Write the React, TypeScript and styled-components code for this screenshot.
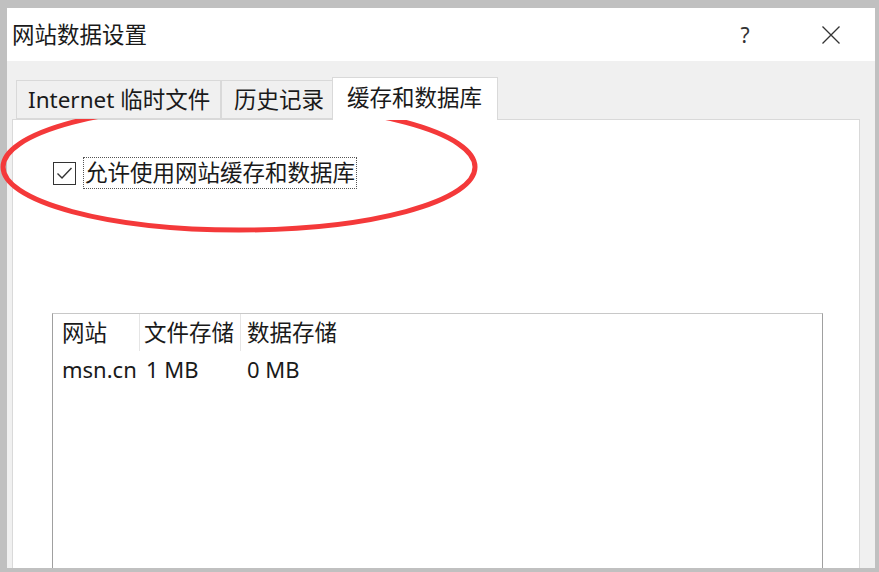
import React from "react";
import styled, { createGlobalStyle } from "styled-components";

const GlobalStyle = createGlobalStyle`
  html, body { margin: 0; padding: 0; background: #c0c0c0; }
  body { font-family: "Noto Sans", "Noto Sans CJK SC", sans-serif; }
`;

const FONT = `"Noto Sans", "Noto Sans CJK SC", sans-serif`;
const SIZE = "22.5px";

const Frame = styled.div`
  position: relative;
  width: 879px;
  height: 572px;
  box-sizing: border-box;
  padding: 8px 4px 4px 7px;
  background: #c0c0c0;
  overflow: hidden;
  font-family: ${FONT};
  color: #1a1a1a;
`;

const Dialog = styled.div`
  display: flex;
  flex-direction: column;
  width: 868px;
  height: 560px;
  overflow: hidden;
`;

const TitleBar = styled.div`
  position: relative;
  flex: 0 0 53px;
  display: flex;
  align-items: center;
  background: #ffffff;
  padding-left: 5px;
  &::after {
    content: "";
    position: absolute;
    right: -1px;
    top: 5px;
    bottom: 1px;
    width: 1px;
    background: #6e6e6e;
  }
`;

const Title = styled.div`
  font-size: ${SIZE};
  line-height: 30px;
  color: #1a1a1a;
`;

const HelpButton = styled.div`
  margin-left: auto;
  width: 50px;
  height: 53px;
  display: flex;
  align-items: center;
  justify-content: center;
  font-size: 21px;
  color: #333;
`;

const CloseButton = styled.div`
  margin-left: 35px;
  margin-right: 18px;
  width: 52px;
  height: 53px;
  display: flex;
  align-items: center;
  justify-content: center;
`;

const Body = styled.div`
  flex: 1;
  display: flex;
  flex-direction: column;
  background: #f0f0f0;
  padding: 15px 15px 0 5px;
  min-height: 0;
`;

const TabStrip = styled.div`
  display: flex;
  align-items: flex-end;
  height: 43px;
  margin-left: 4px;
  position: relative;
  z-index: 1;
`;

const Tab = styled.div<{ $w: number; $pad: number; $active?: boolean }>`
  box-sizing: border-box;
  width: ${(p) => p.$w}px;
  height: ${(p) => (p.$active ? 43 : 39)}px;
  margin-left: ${(p) => (p.$active ? -1 : 0)}px;
  margin-bottom: ${(p) => (p.$active ? -1 : 0)}px;
  padding-left: ${(p) => p.$pad}px;
  display: flex;
  align-items: ${(p) => (p.$active ? "flex-start" : "center")};
  padding-top: ${(p) => (p.$active ? 5 : 0)}px;
  background: ${(p) => (p.$active ? "#ffffff" : "#f0f0f0")};
  border: 1px solid #d9d9d9;
  border-bottom: ${(p) => (p.$active ? "none" : "1px solid #d9d9d9")};
  & + & { border-left: ${(p) => (p.$active ? "1px solid #d9d9d9" : "none")}; }
  font-size: ${SIZE};
  line-height: 30px;
  white-space: nowrap;
  color: #1a1a1a;
`;

const Panel = styled.div`
  flex: 1;
  background: #ffffff;
  border: 1px solid #d9d9d9;
  border-bottom: none;
  padding: 37px 37px 0 39px;
  display: flex;
  flex-direction: column;
`;

const CheckRow = styled.div`
  display: flex;
  align-items: center;
  height: 32px;
`;

const CheckBox = styled.div`
  box-sizing: border-box;
  width: 23px;
  height: 23px;
  margin-left: 1px;
  border: 1.5px solid #333;
  background: #fff;
  display: flex;
  align-items: center;
  justify-content: center;
`;

const CheckLabel = styled.div`
  margin-left: 7px;
  height: 32px;
  box-sizing: border-box;
  border: 1px dotted #555;
  padding: 0 1px;
  font-size: ${SIZE};
  line-height: 30px;
  color: #1a1a1a;
`;

const ListBox = styled.div`
  margin-top: 124px;
  width: 771px;
  flex: 1;
  box-sizing: border-box;
  border-top: 1px solid #c8c8c8;
  border-left: 1px solid #a0a0a0;
  border-right: 1px solid #a0a0a0;
  background: #fff;
`;

const ListRow = styled.div<{ $header?: boolean }>`
  display: flex;
  height: ${(p) => (p.$header ? 37 : 36)}px;
  align-items: center;
  font-size: 22px;
  line-height: 30px;
  color: #1a1a1a;
`;

const Cell = styled.div<{ $w: number; $pad: number; $sep?: boolean }>`
  box-sizing: border-box;
  width: ${(p) => p.$w}px;
  height: 100%;
  padding-left: ${(p) => p.$pad}px;
  display: flex;
  align-items: center;
  white-space: nowrap;
  border-right: ${(p) => (p.$sep ? "1px solid #e5e5e5" : "none")};
`;

const CjkText = styled.span`
  font-size: ${SIZE};
`;

const Annotation = styled.svg`
  position: absolute;
  left: 0;
  top: 0;
  pointer-events: none;
`;

const columns = [
  { title: "网站", w: 87, pad: 9 },
  { title: "文件存储", w: 101, pad: 4 },
  { title: "数据存储", w: 200, pad: 6 },
];

const rows = [["msn.cn", "1 MB", "0 MB"]];

export default function App() {
  return (
    <>
      <GlobalStyle />
      <Frame>
        <Dialog>
          <TitleBar>
            <Title>网站数据设置</Title>
            <HelpButton>?</HelpButton>
            <CloseButton>
              <svg width="18" height="18" viewBox="0 0 18 18">
                <path d="M0.5 0.5 L17.5 17.5 M17.5 0.5 L0.5 17.5" stroke="#333" strokeWidth="1.3" fill="none" />
              </svg>
            </CloseButton>
          </TitleBar>
          <Body>
            <TabStrip>
              <Tab $w={205} $pad={11}>Internet 临时文件</Tab>
              <Tab $w={112} $pad={12}>历史记录</Tab>
              <Tab $w={166} $pad={14} $active>缓存和数据库</Tab>
            </TabStrip>
            <Panel>
              <CheckRow>
                <CheckBox>
                  <svg width="17" height="14" viewBox="0 0 17 14">
                    <path d="M1.5 7.5 L6 12 L15.5 2" stroke="#333" strokeWidth="1.4" fill="none" />
                  </svg>
                </CheckBox>
                <CheckLabel>允许使用网站缓存和数据库</CheckLabel>
              </CheckRow>
              <ListBox>
                <ListRow $header>
                  {columns.map((c, i) => (
                    <Cell key={c.title} $w={c.w} $pad={c.pad} $sep={i < 2}>
                      <CjkText>{c.title}</CjkText>
                    </Cell>
                  ))}
                </ListRow>
                {rows.map((r) => (
                  <ListRow key={r[0]}>
                    {r.map((v, i) => (
                      <Cell key={i} $w={columns[i].w} $pad={i === 0 ? 9 : 6}>
                        {v}
                      </Cell>
                    ))}
                  </ListRow>
                ))}
              </ListBox>
            </Panel>
          </Body>
        </Dialog>
        <Annotation width="879" height="572" viewBox="0 0 879 572">
          <ellipse cx="239" cy="167" rx="236" ry="63" fill="none" stroke="#f4393a" strokeWidth="5" />
        </Annotation>
      </Frame>
    </>
  );
}
